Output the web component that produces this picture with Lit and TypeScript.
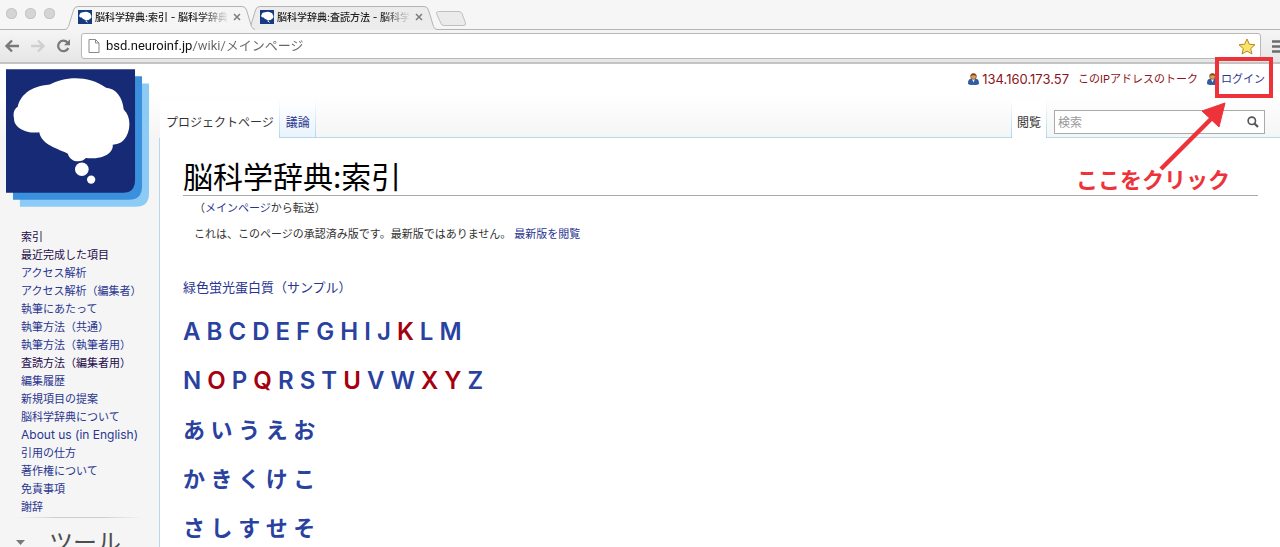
import { LitElement, html, css, svg } from "lit";
import { customElement, property } from "lit/decorators.js";
import { classMap } from "lit/directives/class-map.js";

const brainPath =
  "M42 175C38 155 45 145 53 141C60 108 88 78 150 73C190 50 265 42 319 83C350 86 368 112 372 148C395 168 395 215 372 240C362 251 350 253 339 254C342 282 302 300 258 294C248 308 212 310 204 281C160 262 124 250 118 217C82 221 42 205 42 175Z";

const brain = svg`
  <path fill="#fff" d=${brainPath}></path>
  <circle fill="#fff" cx="246" cy="328" r="20.5"></circle>
  <circle fill="#fff" cx="274" cy="359" r="12.5"></circle>
`;

const userIcon = html`
  <svg width="11" height="12" viewBox="0 0 11 12" aria-hidden="true">
    <path d="M.5 11V8.600Q.8 6.300 3 6h5q2.200.3 2.500 2.600V11Q5.500 12.700.5 11Z" fill="#2f5da8" stroke="#1f3f78" stroke-width=".6"></path>
    <path d="M4 6h3L5.500 9.500Z" fill="#fff"></path>
    <circle cx="5.500" cy="3.400" r="2.900" fill="#d9a05c" stroke="#7a4a1c" stroke-width=".7"></circle>
    <path d="M2.600 3Q3 .5 5.500.5T8.400 3Q5.500 1.600 2.600 3Z" fill="#7a4a1c"></path>
  </svg>
`;

@customElement("browser-tab")
class BrowserTab extends LitElement {
  @property() label = "";
  @property({ type: Boolean, reflect: true }) active = false;

  static styles = css`
    :host {
      display: block;
      position: relative;
      width: 190px;
      height: 24px;
      flex: none;
    }
    :host([active]) {
      z-index: 1;
    }
    .shape {
      position: absolute;
      inset: 0;
      width: 100%;
      height: 100%;
    }
    .row {
      position: relative;
      display: flex;
      align-items: center;
      gap: 3px;
      height: 22px;
      padding: 0 14px 0 13px;
    }
    .icon {
      flex: none;
    }
    .title {
      flex: 1;
      overflow: hidden;
      white-space: nowrap;
      font-size: 10px;
      font-weight: 500;
      line-height: 16px;
      color: #222;
      mask-image: linear-gradient(to right, #000 105px, transparent 134px);
    }
    .close {
      flex: none;
      display: flex;
      border: 0;
      padding: 0;
      background: none;
    }
  `;

  render() {
    return html`
      <svg class="shape" viewBox="0 0 190 24" preserveAspectRatio="none" aria-hidden="true">
        <path
          d="M0 23.500Q2.500 23 3.500 20.500L8.500 4Q9.500.5 13 .5H177Q180.500.5 181.500 4L186.500 20.500Q187.500 23 190 23.500V24H0Z"
          fill=${this.active ? "#f5f5f5" : "#ececec"}
        ></path>
        <path
          d="M0 23.500Q2.500 23 3.500 20.500L8.500 4Q9.500.5 13 .5H177Q180.500.5 181.500 4L186.500 20.500Q187.500 23 190 23.500"
          fill="none"
          stroke="#b4b4b4"
        ></path>
      </svg>
      <div class="row">
        <svg class="icon" width="14" height="14" viewBox="8 8 396 396" aria-hidden="true">
          <rect x="8" y="8" width="396" height="396" fill="#163a82"></rect>
          ${brain}
        </svg>
        <span class="title">${this.label}</span>
        <button class="close" aria-label="閉じる">
          <svg width="8" height="8" viewBox="0 0 8 8"><path d="M1 1l6 6M7 1l-6 6" stroke="#7c7c7c" stroke-width="1.500"></path></svg>
        </button>
      </div>
    `;
  }
}

@customElement("browser-chrome")
class BrowserChrome extends LitElement {
  static styles = css`
    :host {
      display: block;
      flex: none;
      background: #f6f6f6;
    }
    .strip {
      display: flex;
      align-items: flex-end;
      height: 30px;
      border-bottom: 1px solid #b4b4b4;
      box-sizing: border-box;
    }
    .lights {
      display: flex;
      gap: 8px;
      padding: 0 10px 10px 6px;
    }
    .light {
      width: 11px;
      height: 11px;
      border-radius: 50%;
      background: #d5d5d5;
      box-shadow: inset 0 0 0 1px #c6c6c6;
    }
    browser-tab {
      margin-right: -8px;
      margin-bottom: -1px;
    }
    .new {
      border: 0;
      padding: 0 0 3px;
      margin-left: 6px;
      background: none;
      display: flex;
    }
    .bar {
      display: flex;
      align-items: center;
      height: 34px;
      box-sizing: border-box;
      padding-left: 4px;
      background: linear-gradient(#f5f5f5, #e6e6e6);
      border-bottom: 2px solid #c4c4c4;
      overflow: hidden;
    }
    .tool {
      flex: none;
      display: flex;
      border: 0;
      padding: 0;
      background: none;
      margin-right: 10px;
    }
    .box {
      flex: 1;
      display: flex;
      align-items: center;
      gap: 6px;
      height: 26px;
      box-sizing: border-box;
      padding: 0 4px 0 6px;
      border: 1px solid #b8b8b8;
      border-radius: 3px;
      background: #fff;
    }
    .url {
      flex: 1;
      min-width: 0;
      border: 0;
      padding: 0;
      outline: 0;
      font: 13px/20px "Roboto", "Noto Sans CJK JP", sans-serif;
      color: transparent;
      background: linear-gradient(to right, #111 87px, #666 87px);
      background-clip: text;
      -webkit-background-clip: text;
    }
    .star {
      margin: 0;
    }
    .menu {
      margin: 0 -8px 0 11px;
    }
  `;

  render() {
    return html`
      <div class="strip">
        <div class="lights">
          <span class="light"></span><span class="light"></span><span class="light"></span>
        </div>
        <browser-tab active label="脳科学辞典:索引 - 脳科学辞典"></browser-tab>
        <browser-tab label="脳科学辞典:査読方法 - 脳科学"></browser-tab>
        <button class="new" aria-label="新しいタブ">
          <svg width="32" height="15" viewBox="0 0 32 15">
            <path d="M3.500.5H24Q26 .5 27 2.500L30.500 12Q31 14.500 29 14.500H9Q7 14.500 6 12.500L1.500 2.500Q1 .5 3.500.5Z" fill="#ebebeb" stroke="#c0c0c0"></path>
          </svg>
        </button>
      </div>
      <div class="bar">
        <button class="tool" aria-label="戻る">
          <svg width="16" height="14" viewBox="0 0 16 14"><path d="M15 7H3M8 1.500L2.500 7L8 12.500" fill="none" stroke="#7a7a7a" stroke-width="2.400"></path></svg>
        </button>
        <button class="tool" aria-label="進む">
          <svg width="16" height="14" viewBox="0 0 16 14"><path d="M1 7H13M8 1.500L13.500 7L8 12.500" fill="none" stroke="#cfcfcf" stroke-width="2.400"></path></svg>
        </button>
        <button class="tool" aria-label="再読み込み">
          <svg width="15" height="14" viewBox="0 0 15 14">
            <path d="M11.500 3.500A5.300 5.300 0 1 0 12.300 9" fill="none" stroke="#7a7a7a" stroke-width="2.300"></path>
            <path d="M14 .3V6.300H8Z" fill="#7a7a7a"></path>
          </svg>
        </button>
        <div class="box">
          <svg width="12" height="14" viewBox="0 0 12 14" aria-hidden="true">
            <path d="M1 .5H7.500L11 4V13.500H1ZM7.500.5V4H11" fill="#fff" stroke="#8a8a8a"></path>
          </svg>
          <input class="url" type="text" aria-label="アドレス" value="bsd.neuroinf.jp/wiki/メインページ" />
          <button class="tool star" aria-label="ブックマーク">
            <svg width="18" height="17" viewBox="0 0 18 17">
              <path d="M9 1L11.300 6.200L17 6.800L12.700 10.500L14 16L9 13.100L4 16L5.300 10.500L1 6.800L6.700 6.200Z" fill="#fbe46a" stroke="#b58a1e" stroke-linejoin="round"></path>
            </svg>
          </button>
        </div>
        <button class="tool menu" aria-label="メニュー">
          <svg width="16" height="13" viewBox="0 0 16 13"><path d="M0 1.500H16M0 6.500H16M0 11.500H16" stroke="#6c6c6c" stroke-width="2.400"></path></svg>
        </button>
      </div>
    `;
  }
}

interface Item {
  text: string;
  visited?: boolean;
  latin?: boolean;
}

const menu: Item[] = [
  { text: "索引", visited: true },
  { text: "最近完成した項目", visited: true },
  { text: "アクセス解析" },
  { text: "アクセス解析（編集者）" },
  { text: "執筆にあたって" },
  { text: "執筆方法（共通）" },
  { text: "執筆方法（執筆者用）" },
  { text: "査読方法（編集者用）", visited: true },
  { text: "編集履歴" },
  { text: "新規項目の提案" },
  { text: "脳科学辞典について" },
  { text: "About us (in English)", latin: true },
  { text: "引用の仕方" },
  { text: "著作権について" },
  { text: "免責事項" },
  { text: "謝辞" },
];

const indexRows = [
  { chars: "ABCDEFGHIJKLM", latin: true },
  { chars: "NOPQRSTUVWXYZ", latin: true },
  { chars: "あいうえお", latin: false },
  { chars: "かきくけこ", latin: false },
  { chars: "さしすせそ", latin: false },
];
const missing = new Set("KOQUXY");

@customElement("app-root")
class AppRoot extends LitElement {
  static styles = css`
    :host {
      display: flex;
      flex-direction: column;
      height: 100vh;
      overflow: hidden;
      font-family: "Inter", "Noto Sans CJK JP", sans-serif;
      font-size: 11px;
      line-height: 18px;
      color: #333;
      background: #fff;
    }
    a {
      color: #2a3590;
      text-decoration: none;
    }
    .page {
      flex: 1;
      min-height: 0;
      display: flex;
      background: linear-gradient(#fff 30px, #f5f5f5 74px);
    }
    .side {
      flex: none;
      width: 160px;
      box-sizing: border-box;
      padding: 5px 0 0 6px;
    }
    .logo {
      display: block;
    }
    .menu {
      list-style: none;
      margin: 21px 0 0;
      padding: 0 0 0 15px;
    }
    .menu li {
      height: 18px;
    }
    .menu .visited {
      color: #1c0b4a;
    }
    .menu .latin {
      font-size: 12px;
    }
    .rule {
      height: 1px;
      margin: 1px 17px 10px 11px;
      background: linear-gradient(to right, transparent, #ccc 33%, #ccc 66%, transparent);
    }
    .tools {
      display: flex;
      align-items: center;
      gap: 23px;
      margin: 0;
      padding-left: 9px;
      font-size: 24px;
      font-weight: 400;
      line-height: 30px;
      color: #4d4d4d;
    }
    .main {
      flex: 1;
      min-width: 0;
      display: flex;
      flex-direction: column;
    }
    .personal {
      flex: none;
      display: flex;
      justify-content: flex-end;
      align-items: center;
      gap: 9px;
      height: 30px;
      margin-bottom: 6px;
      padding-right: 15px;
      white-space: nowrap;
    }
    .personal a {
      display: flex;
      align-items: center;
      gap: 3px;
    }
    .personal .red {
      color: #8c1420;
    }
    .personal .address {
      font-size: 13px;
    }
    .login {
      position: relative;
      display: flex;
    }
    .mark {
      position: absolute;
      right: -8px;
      top: -13px;
      width: 58px;
      height: 41px;
      box-sizing: border-box;
      border: 4px solid #ee3239;
      z-index: 1;
    }
    .arrow {
      position: absolute;
      right: 36px;
      top: 32px;
      z-index: 1;
    }
    .hint {
      position: absolute;
      right: 35px;
      top: 96px;
      font-size: 22px;
      font-weight: 700;
      line-height: 28px;
      color: #ee3239;
      z-index: 1;
    }
    .head {
      flex: none;
      display: flex;
      height: 38px;
      font-size: 12px;
    }
    .tab {
      box-sizing: border-box;
      padding: 14px 5px 0 6px;
      border-right: 1px solid;
      border-image: linear-gradient(#fff, #a7d7f0) 1;
      background: linear-gradient(#fff, #e9f3fb);
      box-shadow: inset 0 -1px #b5d9ea;
      white-space: nowrap;
    }
    .tab.current {
      color: #333;
      background: #fff;
      box-shadow: none;
    }
    .fill {
      flex: 1;
      border-bottom: 1px solid #b5d9ea;
    }
    .tab.view {
      border-left: 1px solid;
      padding-left: 5px;
    }
    .find {
      display: flex;
      align-items: flex-start;
      padding: 10px 15px 0 7px;
      border-bottom: 1px solid #b5d9ea;
    }
    .field {
      display: flex;
      align-items: center;
      width: 211px;
      height: 24px;
      box-sizing: border-box;
      padding: 0 5px 0 3px;
      border: 1px solid #aaa;
      background: #fff;
    }
    .query {
      flex: 1;
      min-width: 0;
      border: 0;
      padding: 0;
      outline: 0;
      background: none;
      font: 12px/18px "Noto Sans CJK JP", sans-serif;
    }
    .query::placeholder {
      color: #999;
    }
    .go {
      display: flex;
      border: 0;
      padding: 0;
      background: none;
    }
    .body {
      flex: 1 0 auto;
      padding: 17px 22px 0 23px;
      border-left: 1px solid #b5d9ea;
      background: #fff;
      margin-left: -1px;
    }
    h1 {
      margin: 0 0 3px;
      font: 400 30px/40px "Noto Sans CJK JP", sans-serif;
      color: #000;
      border-bottom: 1px solid #aaa;
    }
    .note {
      margin: 0 0 8px;
      padding-left: 11px;
    }
    .note a {
      margin-left: 3px;
    }
    .note .flush {
      margin-left: 0;
    }
    .sample {
      margin: 34px 0 22px;
      font-size: 13px;
      line-height: 20px;
    }
    h2 {
      margin: 0 0 23px;
      font-size: 22px;
      font-weight: 600;
      line-height: 26px;
    }
    h2.latin {
      font-size: 24px;
    }
    h2 a {
      color: #2a429f;
    }
    h2 .missing {
      color: #a5000f;
    }
  `;

  render() {
    return html`
      <browser-chrome></browser-chrome>
      <div class="page">
        <nav class="side">
          <svg class="logo" width="143" height="138" viewBox="18 27 430 414" role="img" aria-label="脳科学辞典">
            <path d="M60 70H448V401Q448 441 408 441H60Z" fill="#8ccbf5"></path>
            <path d="M39 48H427V380Q427 420 387 420H39Z" fill="#3a90dc"></path>
            <path d="M18 27H406V359Q406 399 370 399H18Z" fill="#162a75"></path>
            ${brain}
          </svg>
          <ul class="menu">
            ${menu.map(
              (m) => html`<li><a href="#" class=${classMap({ visited: !!m.visited, latin: !!m.latin })}>${m.text}</a></li>`
            )}
          </ul>
          <div class="rule"></div>
          <h3 class="tools">
            <svg width="11" height="6" viewBox="0 0 11 6" aria-hidden="true"><path d="M1 0H10L5.500 5Z" fill="#797979"></path></svg>
            ツール
          </h3>
        </nav>
        <div class="main">
          <div class="personal">
            <a class="red address" href="#">${userIcon}134.160.173.57</a>
            <a class="red" href="#">このIPアドレスのトーク</a>
            <div class="login">
              <a href="#">${userIcon}ログイン</a>
              <span class="mark"></span>
              <svg class="arrow" width="70" height="72" viewBox="0 0 70 72" aria-hidden="true">
                <path d="M2 67L52 17" stroke="#ee3239" stroke-width="4.500"></path>
                <path d="M66 1L60 25L43 9Z" fill="#ee3239" stroke="#ee3239" stroke-linejoin="round"></path>
              </svg>
              <span class="hint">ここをクリック</span>
            </div>
          </div>
          <div class="head">
            <a class="tab current" href="#">プロジェクトページ</a>
            <a class="tab" href="#">議論</a>
            <div class="fill"></div>
            <a class="tab current view" href="#">閲覧</a>
            <div class="find">
              <form class="field">
                <input class="query" type="search" placeholder="検索" aria-label="検索" />
                <button class="go" type="button" aria-label="検索を実行">
                  <svg width="12" height="12" viewBox="0 0 12 12"><circle cx="4.800" cy="4.800" r="3.700" fill="none" stroke="#555" stroke-width="1.600"></circle><path d="M7.500 7.500L11 11" stroke="#555" stroke-width="2.200"></path></svg>
                </button>
              </form>
            </div>
          </div>
          <main class="body">
            <h1>脳科学辞典:索引</h1>
            <p class="note">（<a class="flush" href="#">メインページ</a>から転送）</p>
            <p class="note">これは、このページの承認済み版です。最新版ではありません。<a href="#">最新版を閲覧</a></p>
            <p class="sample"><a href="#">緑色蛍光蛋白質（サンプル）</a></p>
            ${indexRows.map(
              (row) => html`<h2 class=${classMap({ latin: row.latin })}>
                ${[...row.chars].map((c) => html`<a href="#" class=${classMap({ missing: missing.has(c) })}>${c}</a> `)}
              </h2>`
            )}
          </main>
        </div>
      </div>
    `;
  }
}
